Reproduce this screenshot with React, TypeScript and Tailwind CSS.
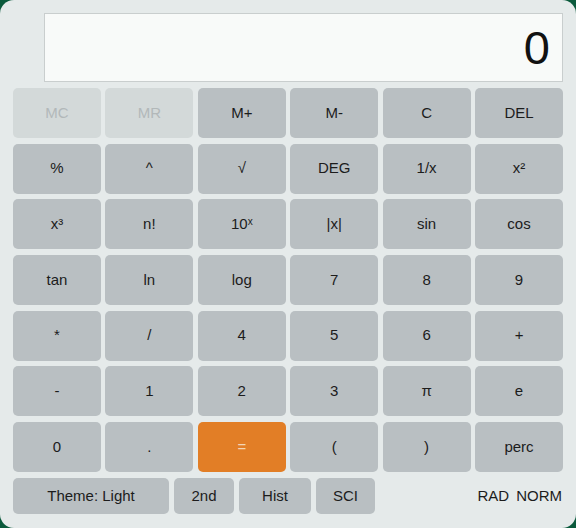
import React from "react";

type Key = { label: React.ReactNode; kind?: "disabled" | "accent" };

const keys: Key[] = [
  { label: "MC", kind: "disabled" },
  { label: "MR", kind: "disabled" },
  { label: "M+" },
  { label: "M-" },
  { label: "C" },
  { label: "DEL" },
  { label: "%" },
  { label: "^" },
  { label: "√" },
  { label: "DEG" },
  { label: "1/x" },
  { label: "x²" },
  { label: "x³" },
  { label: "n!" },
  {
    label: (
      <span>
        10<sup className="text-[10px] relative -top-[4px]">x</sup>
      </span>
    ),
  },
  { label: "|x|" },
  { label: "sin" },
  { label: "cos" },
  { label: "tan" },
  { label: "ln" },
  { label: "log" },
  { label: "7" },
  { label: "8" },
  { label: "9" },
  { label: "*" },
  { label: "/" },
  { label: "4" },
  { label: "5" },
  { label: "6" },
  { label: "+" },
  { label: "-" },
  { label: "1" },
  { label: "2" },
  { label: "3" },
  { label: "π" },
  { label: "e" },
  { label: "0" },
  { label: "." },
  { label: "=", kind: "accent" },
  { label: "(" },
  { label: ")" },
  { label: "perc" },
];

function KeyButton({ k }: { k: Key }) {
  const base =
    "h-[50px] rounded-[5px] flex items-center justify-center text-[15px]";
  if (k.kind === "disabled")
    return (
      <div className={`${base} bg-[#d3d9d9] text-[#b2b8b9]`}>{k.label}</div>
    );
  if (k.kind === "accent")
    return (
      <div className={`${base} bg-[#e27e26] text-[#f3d6b5]`}>{k.label}</div>
    );
  return <div className={`${base} bg-[#b9bfc2] text-[#1c1c1c]`}>{k.label}</div>;
}

export default function App() {
  return (
    <div
      className="w-[576px] h-[528px] bg-[#0b5a3c]"
      style={{ fontFamily: '"Liberation Sans", Arial, sans-serif' }}
    >
      <div className="w-full h-full rounded-[14px] bg-[#e5eaea] px-[13px] pt-[13px]">
        <div className="ml-[31px] h-[69px] border border-[#c9cece] bg-[#f8faf9] flex items-center justify-end pr-[12px]">
          <span className="text-[47px] leading-none text-[#111]">0</span>
        </div>
        <div className="mt-[6px] grid grid-cols-6 gap-x-[4.5px] gap-y-[5.67px]">
          {keys.map((k, i) => (
            <KeyButton key={i} k={k} />
          ))}
        </div>
        <div className="mt-[6px] flex items-center h-[36px] text-[15px] text-[#1c1c1c]">
          <div className="w-[156px] h-full rounded-[5px] bg-[#b9bfc2] flex items-center justify-center">
            Theme: Light
          </div>
          <div className="ml-[5px] w-[60px] h-full rounded-[5px] bg-[#b9bfc2] flex items-center justify-center">
            2nd
          </div>
          <div className="ml-[5px] w-[72px] h-full rounded-[5px] bg-[#b9bfc2] flex items-center justify-center">
            Hist
          </div>
          <div className="ml-[5px] w-[59px] h-full rounded-[5px] bg-[#b9bfc2] flex items-center justify-center">
            SCI
          </div>
          <div className="ml-auto mr-[1px] flex gap-[7px]">
            <span>RAD</span>
            <span>NORM</span>
          </div>
        </div>
      </div>
    </div>
  );
}
